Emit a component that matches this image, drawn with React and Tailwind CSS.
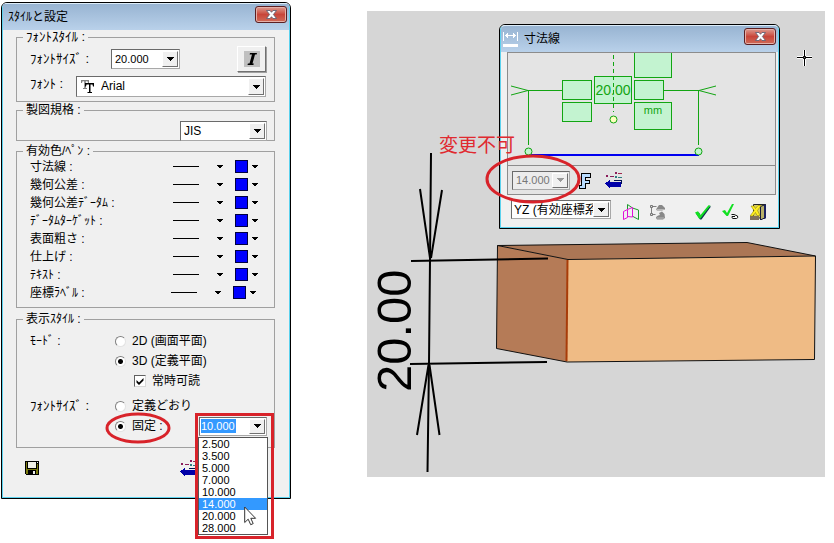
import React from "react";

const FONT = "font-['Liberation_Sans','Noto_Sans_CJK_JP',sans-serif]";

const penRows = ["寸法線", "幾何公差", "幾何公差ﾃﾞｰﾀﾑ", "ﾃﾞｰﾀﾑﾀｰｹﾞｯﾄ", "表面粗さ", "仕上げ", "ﾃｷｽﾄ", "座標ﾗﾍﾞﾙ"];
const sizes = ["2.500", "3.500", "5.000", "7.000", "10.000", "14.000", "20.000", "28.000"];

function ArrowCap({ muted }) {
  return (
    <span className="pointer-events-none absolute inset-y-px right-px flex w-4 items-center justify-center border border-t-white border-l-white border-r-[#707070] border-b-[#707070] bg-[#f0f0f0]">
      <svg width="7" height="4" viewBox="0 0 7 4" shapeRendering="crispEdges">
        <path d="M0 0h7v1H6v1H5v1H4v1H3V3H2V2H1V1H0z" fill={muted ? "#999" : "#000"} />
      </svg>
    </span>
  );
}

function Combo({ label, options, disabled, className, selectClass }) {
  return (
    <span className={"relative flex border border-t-[#6a6a6a] border-l-[#6a6a6a] border-r-[#a8a8a8] border-b-[#a8a8a8] " + (disabled ? "bg-[#ececec] " : "bg-white ") + className}>
      <select
        aria-label={label}
        disabled={disabled}
        className={"w-full appearance-none bg-transparent pr-4 leading-4 outline-none disabled:text-[#777] disabled:opacity-100 " + selectClass}
      >
        {options.map((o) => (
          <option key={o}>{o}</option>
        ))}
      </select>
      <ArrowCap muted={disabled} />
    </span>
  );
}

function CloseButton() {
  return (
    <button aria-label="閉じる" className="flex h-[17px] w-8 items-center justify-center rounded-[3px] border border-[#5b1f22] bg-linear-to-b from-[#dc9a90] via-[#c8453a] via-50% to-[#cf6a58] shadow-[inset_0_0_0_1px_#e5b0a8]">
      <svg width="11" height="9" viewBox="0 0 11 9">
        <path d="M0.5 0.5H4L5.500 2.300 7 .5h3.500L7.400 4.500l3.100 4H7L5.500 6.700 4 8.500H.5l3.100-4z" fill="#fff" stroke="#555b70" strokeWidth="0.800" />
      </svg>
    </button>
  );
}

function Group({ title, className, children, wide }) {
  return (
    <fieldset className={"border border-[#a0a0a0] " + className}>
      <legend className={"ml-[6px] px-[3px] leading-[14px] " + (wide ? "text-[13px]" : "text-[12px]")}>{title} :</legend>
      {children}
    </fieldset>
  );
}

function Choice({ type, name, label, checked }) {
  const box =
    type === "radio"
      ? "size-[11px] rounded-full checked:bg-[radial-gradient(circle,#000_0_2px,#fff_3px)] border-t-[#808080] border-l-[#808080] border-r-[#e3e3e3] border-b-[#e3e3e3]"
      : "size-3 border-t-[#606060] border-l-[#606060] border-r-[#d8d8d8] border-b-[#d8d8d8]";
  return (
    <label className="flex h-5 items-center gap-[6px]">
      <span className="relative flex">
        <input type={type} name={name} defaultChecked={checked} className={"peer appearance-none border bg-white " + box} />
        {type === "checkbox" && (
          <svg className="pointer-events-none absolute inset-0 hidden peer-checked:block" width="12" height="12" viewBox="0 0 12 12">
            <path d="M2.500 5l2.500 2.500L9.500 3v2.500L5 10 2.500 7.500z" fill="#000" />
          </svg>
        )}
      </span>
      {label}
    </label>
  );
}

function SmallArrow() {
  return (
    <svg width="6" height="3" viewBox="0 0 6 3" shapeRendering="crispEdges">
      <path d="M0 0h6v1H5v1H4v1H2V2H1V1H0z" fill="#000" />
    </svg>
  );
}

function ResetIcon() {
  return (
    <svg width="17" height="16" viewBox="0 0 17 16" shapeRendering="crispEdges">
      <path d="M1 3h2v2H1zM5 4h4v1H5zM10 0h2v2h-2z" fill="#8a1c5a" />
      <path d="M13 1h4v1h-4z" fill="#a02a50" />
      <path d="M10 4h2v2h-2zM13 5h4v1h-4z" fill="#2f7d80" />
      <path d="M0 11.500l5-4v2h11v5H5v1.500z" fill="#0000a8" />
      <path d="M9 8h8v4h-1V9H9z" fill="#001050" />
    </svg>
  );
}

function Titlebar({ icon, title }) {
  return (
    <div className="flex items-start justify-between bg-linear-to-b from-[#98b4d2] to-[#b9d1ea] pt-[2px] pr-[2px] pl-[5px]">
      <div className="flex h-6 items-center gap-[6px] pb-[2px]">
        {icon}
        <h2>{title}</h2>
      </div>
      <CloseButton />
    </div>
  );
}

function StyleDialog() {
  return (
    <section className="relative mt-[2px] ml-px w-[290px] shrink-0 rounded-t-md border border-black bg-[#f0f0f0]">
      <div className="rounded-t-[5px] border border-[#5cd2ee] border-t-[#dcecf8]">
        <Titlebar title="ｽﾀｲﾙと設定" />
        <form className="pr-[14px] pb-[21px] pl-[13px]">
          <Group title="ﾌｫﾝﾄｽﾀｲﾙ" wide className="pt-[2px] pb-1">
            <div className="flex h-[26px] items-center pr-[8px] pl-[13px]">
              <span className="w-[81px] text-[13px]">ﾌｫﾝﾄｻｲｽﾞ :</span>
              <Combo label="ﾌｫﾝﾄｻｲｽﾞ" options={["20.000"]} className="h-5 w-[69px]" selectClass="pl-[3px] text-[11px]" />
              <button type="button" aria-label="斜体" className="ml-auto flex h-[26px] w-[29px] items-center justify-center border border-t-white border-l-white border-r-[#707070] border-b-[#707070] shadow-[1px_1px_0_#a0a0a0]">
                <svg width="16" height="16" viewBox="0 0 16 16">
                  <path d="M0 0h16v16H0z" fill="#c0c0c0" />
                  <path d="M6 2h7l-.4 1.500h-1.600L8.500 12.500h1.300l-.4 1.500H3.500l.4-1.500h1.600L8 3.500H5.600z" fill="#000" />
                </svg>
              </button>
            </div>
            <div className="mt-1 flex h-[21px] items-center pr-[8px] pl-[13px]">
              <span className="w-[46px] pb-[5px] text-[13px]">ﾌｫﾝﾄ :</span>
              <span className="relative flex flex-1">
                <Combo label="ﾌｫﾝﾄ" options={["Arial"]} className="h-[21px] w-full" selectClass="pl-[24px] pb-[2px]" />
                <svg className="pointer-events-none absolute top-1 left-[5px]" width="13" height="13" viewBox="0 0 13 13">
                  <path d="M0 0h8v3H7L6.500 1.200H4.800V8H6v1H2V8h1.200V1.200H1.500L1 3H0z" fill="#808080" />
                  <path d="M4 3h9v3.500h-1l-.5-2H9.500V12H11v1H6.500v-1H8V4.500H5.500l-.5 2H4z" fill="#000" />
                </svg>
              </span>
            </div>
          </Group>
          <Group title="製図規格" className="mt-px pt-1">
            <Combo label="製図規格" options={["JIS"]} className="mr-[7px] -mb-px ml-auto h-5 w-[87px]" selectClass="pl-[3px]" />
          </Group>
          <Group title="有効色/ﾍﾟﾝ" className="mt-[3px] pb-[5px]">
            {penRows.map((name) => (
              <div key={name} className="flex h-[18px] items-center pr-4 pl-[13px] last:pr-[18px]">
                <span className="flex-1">{name} :</span>
                <button type="button" aria-label={name + " 線種"} className="flex items-center gap-[18px] pb-[2px]">
                  <span className="w-[26px] border-t border-black" />
                  <SmallArrow />
                </button>
                <button type="button" aria-label={name + " 色"} className="ml-3 flex items-center gap-1 pb-[2px]">
                  <span className="size-[13px] border border-[#000040] bg-[#0000ff]" />
                  <SmallArrow />
                </button>
              </div>
            ))}
          </Group>
          <Group title="表示ｽﾀｲﾙ" className="mt-1 pt-[5px] pb-[11px]">
            <div className="flex pl-[13px]">
              <span className="w-[85px] leading-5">ﾓｰﾄﾞ :</span>
              <div>
                <Choice type="radio" name="mode" label="2D (画面平面)" />
                <Choice type="radio" name="mode" label="3D (定義平面)" checked />
                <div className="pl-[19px]">
                  <Choice type="checkbox" name="readable" label="常時可読" checked />
                </div>
              </div>
            </div>
            <div className="mt-[5px] flex pl-[13px]">
              <span className="w-[85px] text-[13px] leading-5">ﾌｫﾝﾄｻｲｽﾞ :</span>
              <div className="flex-1">
                <Choice type="radio" name="fontsize" label="定義どおり" />
                <div className="relative flex items-center justify-between pr-[7px]">
                  <Choice type="radio" name="fontsize" label="固定 :" checked />
                  <svg className="pointer-events-none absolute -top-[4px] -left-[11px]" width="68" height="32" viewBox="0 0 68 32">
                    <ellipse cx="34" cy="16" rx="31" ry="14" fill="none" stroke="#d8232a" strokeWidth="3" />
                  </svg>
                  <SizePicker />
                </div>
              </div>
            </div>
          </Group>
          <div className="mt-3 flex pr-[78px] pl-[9px]">
            <button type="button" aria-label="保存">
              <svg width="14" height="14" viewBox="0 0 14 14" shapeRendering="crispEdges">
                <path d="M0 0h14v14H1l-1-1z" fill="#000" />
                <path d="M1 1h1v7h10V3h1v10H1z" fill="#7b7b10" />
                <path d="M3 1h8v6H3z" fill="#f0f0e8" />
                <path d="M12 1h1v1h-1z" fill="#eee" />
                <path d="M3 9h8v4H3z" fill="#000" />
                <path d="M8 10h2v3H8z" fill="#eee" />
              </svg>
            </button>
            <button type="button" aria-label="初期化" className="ml-auto">
              <ResetIcon />
            </button>
          </div>
        </form>
      </div>
    </section>
  );
}

function SizePicker() {
  return (
    <div className="relative">
      <div className="relative flex h-[19px] w-[68px] items-center border border-t-[#6a6a6a] border-l-[#6a6a6a] border-r-[#a8a8a8] border-b-[#a8a8a8] bg-white pl-px">
        <input aria-label="固定ｻｲｽﾞ" defaultValue="10.000" className="h-[14px] w-[35px] bg-[#3399ff] text-[11px] text-white outline-none" />
        <ArrowCap />
      </div>
      <ul role="listbox" aria-label="固定ｻｲｽﾞ" className="absolute top-[20px] -left-px z-10 w-[70px] border border-[#555] bg-white text-[11px] leading-3">
        {sizes.map((s) => (
          <li key={s} role="option" aria-selected={s === "14.000"} className="pl-[3px] aria-selected:bg-[#3399ff] aria-selected:text-white">
            {s}
          </li>
        ))}
      </ul>
      <div className="pointer-events-none absolute -top-[4px] -left-[4px] z-20 h-[126px] w-[79px] border-3 border-[#d8232a]" />
      <svg className="pointer-events-none absolute top-[89px] left-[45px] z-30" width="13" height="20" viewBox="0 0 13 20">
        <path d="M.7 1v15.500l3.500-3.300 2.500 5.500 2.500-1.100-2.400-5.300h4.800z" fill="#fff" stroke="#333" />
      </svg>
    </div>
  );
}

function DimensionDiagram() {
  return (
    <svg className="block" width="267" height="112" viewBox="0 0 267 112">
      <g fill="none" stroke="#12a512" shapeRendering="crispEdges">
        <path d="M20.500 37v55M190.500 37v55M20 37.500h35M156 37.500h35" />
      </g>
      <g fill="#c3f3d0" stroke="#12a512" shapeRendering="crispEdges">
        <path d="M54.500 27.500h29v19h-29zM54.500 49.500h29v19h-29zM86.500 23.500h37v27h-37zM126.500 -2.500h37v27h-37zM126.500 27.500h29v19h-29zM126.500 49.500h37v27h-37z" />
      </g>
      <path d="M3 33l17 4.500M3 42l17-4.500M208 33l-17 4.500M208 42l-17-4.500" stroke="#12a512" fill="none" />
      <path d="M105.500 2v57" stroke="#12a512" strokeDasharray="4 3" />
      <circle cx="105.500" cy="66.500" r="3.500" fill="#ffffc0" stroke="#12a512" />
      <path d="M20 102h171" stroke="#0000f0" strokeWidth="2" />
      <circle cx="20.500" cy="98.500" r="3.500" fill="#c3f3d0" stroke="#12a512" />
      <circle cx="190.500" cy="98.500" r="3.500" fill="#c3f3d0" stroke="#12a512" />
      <text x="105" y="42" textAnchor="middle" fontSize="14" fill="#12a512">20.00</text>
      <text x="145" y="61" textAnchor="middle" fontSize="11" fill="#12a512">mm</text>
    </svg>
  );
}

function DimensionDialog() {
  return (
    <section className="absolute top-[13px] left-[132px] w-[281px] rounded-t-md border border-black bg-[#f0f0f0]">
      <div className="overflow-hidden rounded-t-[5px] border border-[#5cd2ee] border-t-[#dcecf8]">
        <Titlebar
          title="寸法線"
          icon={
            <svg className="-ml-[3px]" width="15" height="15" viewBox="0 0 15 15" shapeRendering="crispEdges">
              <path d="M0 0h1v9H0zM14 0h1v9h-1zM2 3h11v1H2zM3 2h1v3H3zM4 1h1v5H4zM11 2h1v3h-1zM10 1h1v5h-1zM0 12h15v3H0z" fill="#fff" />
            </svg>
          }
        />
        <div className="pr-[2px] pb-[7px] pl-[6px]">
          <div className="border border-[#8c8c8c] bg-[#e4e4e4]">
            <DimensionDiagram />
            <div className="flex h-[29px] items-center border-t border-[#8c8c8c] pl-1">
              <Combo label="文字ｻｲｽﾞ" disabled options={["14.000"]} className="h-[19px] w-[58px]" selectClass="pl-[3px] text-[11px]" />
              <button aria-label="ﾌｫﾝﾄ" className="ml-2">
                <svg width="14" height="17" viewBox="0 0 14 17" shapeRendering="crispEdges">
                  <path d="M3 1h10v5H8v2h4v4H8v5H1v-4h2z" fill="#000" />
                  <path d="M4 2h8v3H7v4h4v2H7v5H2v-2h2z" fill="#b9dcff" />
                </svg>
              </button>
              <button aria-label="初期化" className="ml-[13px]">
                <ResetIcon />
              </button>
            </div>
          </div>
          <div className="mt-[5px] flex items-end pl-[4px]">
            <Combo label="座標系" options={["YZ (有効座標系)"]} className="mb-px h-[19px] w-[100px]" selectClass="overflow-hidden pl-[2px]" />
            <button aria-label="平面" className="ml-3">
              <svg width="16" height="16" viewBox="0 0 16 16" fill="none">
                <path d="M4.500 5V.5L9.500 4 15.500 6v9.500L10 12.500" stroke="#1c9a2c" />
                <path d="M.5 7.500l4-2v8l-4 2zM4.500 5.500l5-2v9.500l-5-.5" stroke="#e012d8" />
              </svg>
            </button>
            <button aria-label="参照" className="ml-[10px]">
              <svg width="17" height="16" viewBox="0 0 17 16">
                <path d="M2.500 4v5M2.500 2.500h5M2.500 10.500h4" stroke="#808080" fill="none" />
                <path d="M1.500 1.500h2v2h-2zM1.500 9.500h2v2h-2z" fill="#ddd" stroke="#777" />
                <path d="M7 5.500L10 1h3l3 3v1.500l-3 1H8z" fill="#888" />
                <path d="M7 14q0-2 4-3l-1-2 3-1.500 2.500 2.500.5 4-2 1.500H8z" fill="#888" />
                <path d="M7.500 5.500h8M8 14h7" stroke="#b8b8b8" />
              </svg>
            </button>
            <button aria-label="適用" className="ml-7">
              <svg width="18" height="16" viewBox="0 0 18 16">
                <path d="M2 9.500l3-1L7 12 15.500 2.200 17 2.500 7.500 15.500H6z" fill="#103850" />
                <path d="M1 8.500l3-1.200L6.500 11 14.500 1.200l2 .3L6.500 14.500H5z" fill="#12e022" />
              </svg>
            </button>
            <button aria-label="続けて適用" className="ml-[10px]">
              <svg width="17" height="16" viewBox="0 0 17 16">
                <path d="M0 7l3-1 2 3 5-9h2L6 12H4.500z" fill="#12e022" />
                <path d="M9.500 10.500h2.500l3.500 1.500q1 2-1 2.500h-3.500q-1.500-.5-1-2h3" fill="#fff" stroke="#111" />
              </svg>
            </button>
            <button aria-label="終了" className="ml-[11px]">
              <svg width="16" height="16" viewBox="0 0 16 16">
                <path d="M3.500.5h12V14H3.500z" fill="#d9cf60" stroke="#222" />
                <path d="M0 12h9v4H0z" fill="#80705c" />
                <path d="M10.500 2.500l5-2V13.500l-5 2.500z" fill="#b8b068" stroke="#14183c" />
                <path d="M14 1h2v13l-2 1z" fill="#1b2160" />
                <path d="M1 2h3l1.500 2.500L8 1.500h3L7.500 6.500l2.500 5H7L5.500 8.500 3 12H0l4-5.500z" fill="#ffef20" stroke="#8a7a00" strokeWidth="0.500" />
              </svg>
            </button>
          </div>
        </div>
      </div>
    </section>
  );
}

function Viewport() {
  return (
    <main className="relative mt-[11px] mr-[9px] flex-1 overflow-hidden bg-[#d6d6d6]">
      <svg className="block" width="458" height="466" viewBox="367 11 458 466">
        <path d="M497.500 245.500L747 242.500 815.500 256 568 259.500z" fill="#ab7655" />
        <path d="M497.500 245.500L568 259.500 567 362 496.500 348.500z" fill="#b57b57" />
        <path d="M568 259.500L815.500 256 814.500 359.500 567 362z" fill="#efbb85" />
        <path d="M497.500 245.500L747 242.500 815.500 256 814.500 359.500 567 362 496.500 348.500zM497.500 245.500L568 259.500 815.500 256" fill="none" stroke="#111" />
        <path d="M567.500 260L566.500 361" stroke="#a83c08" strokeWidth="2" />
        <g fill="none" stroke="#000" strokeWidth="2">
          <path d="M431 153L430 260 429 363 427.500 472" />
          <path d="M420 189L430 258M442 190L431 258M417 435L428.500 365M439.500 435L429.500 365" />
          <path d="M411 261L548 258.500M410 364L547 362" />
        </g>
        <path d="M797 57.500h15M804.500 50v16" stroke="#fff" strokeWidth="3" />
        <path d="M797 57.500h15M804.500 50v16" stroke="#000" />
        <path d="M803.500 56.500h2v2h-2z" fill="#888" stroke="#000" />
        <text transform="translate(411 392) rotate(-90)" fontSize="49" fill="#000">20.00</text>
      </svg>
      <DimensionDialog />
      <svg className="pointer-events-none absolute top-[143px] left-[117px]" width="98" height="50" viewBox="0 0 98 50">
        <ellipse cx="49" cy="25" rx="46" ry="23" fill="none" stroke="#d8232a" strokeWidth="3" />
      </svg>
      <p className="pointer-events-none absolute top-[123px] left-[72px] text-[19px] leading-6 text-[#e02a30]">変更不可</p>
    </main>
  );
}

export default function App() {
  return (
    <div className={"flex min-h-screen items-start gap-[76px] bg-white text-[12px] leading-4 text-black " + FONT}>
      <StyleDialog />
      <Viewport />
    </div>
  );
}
